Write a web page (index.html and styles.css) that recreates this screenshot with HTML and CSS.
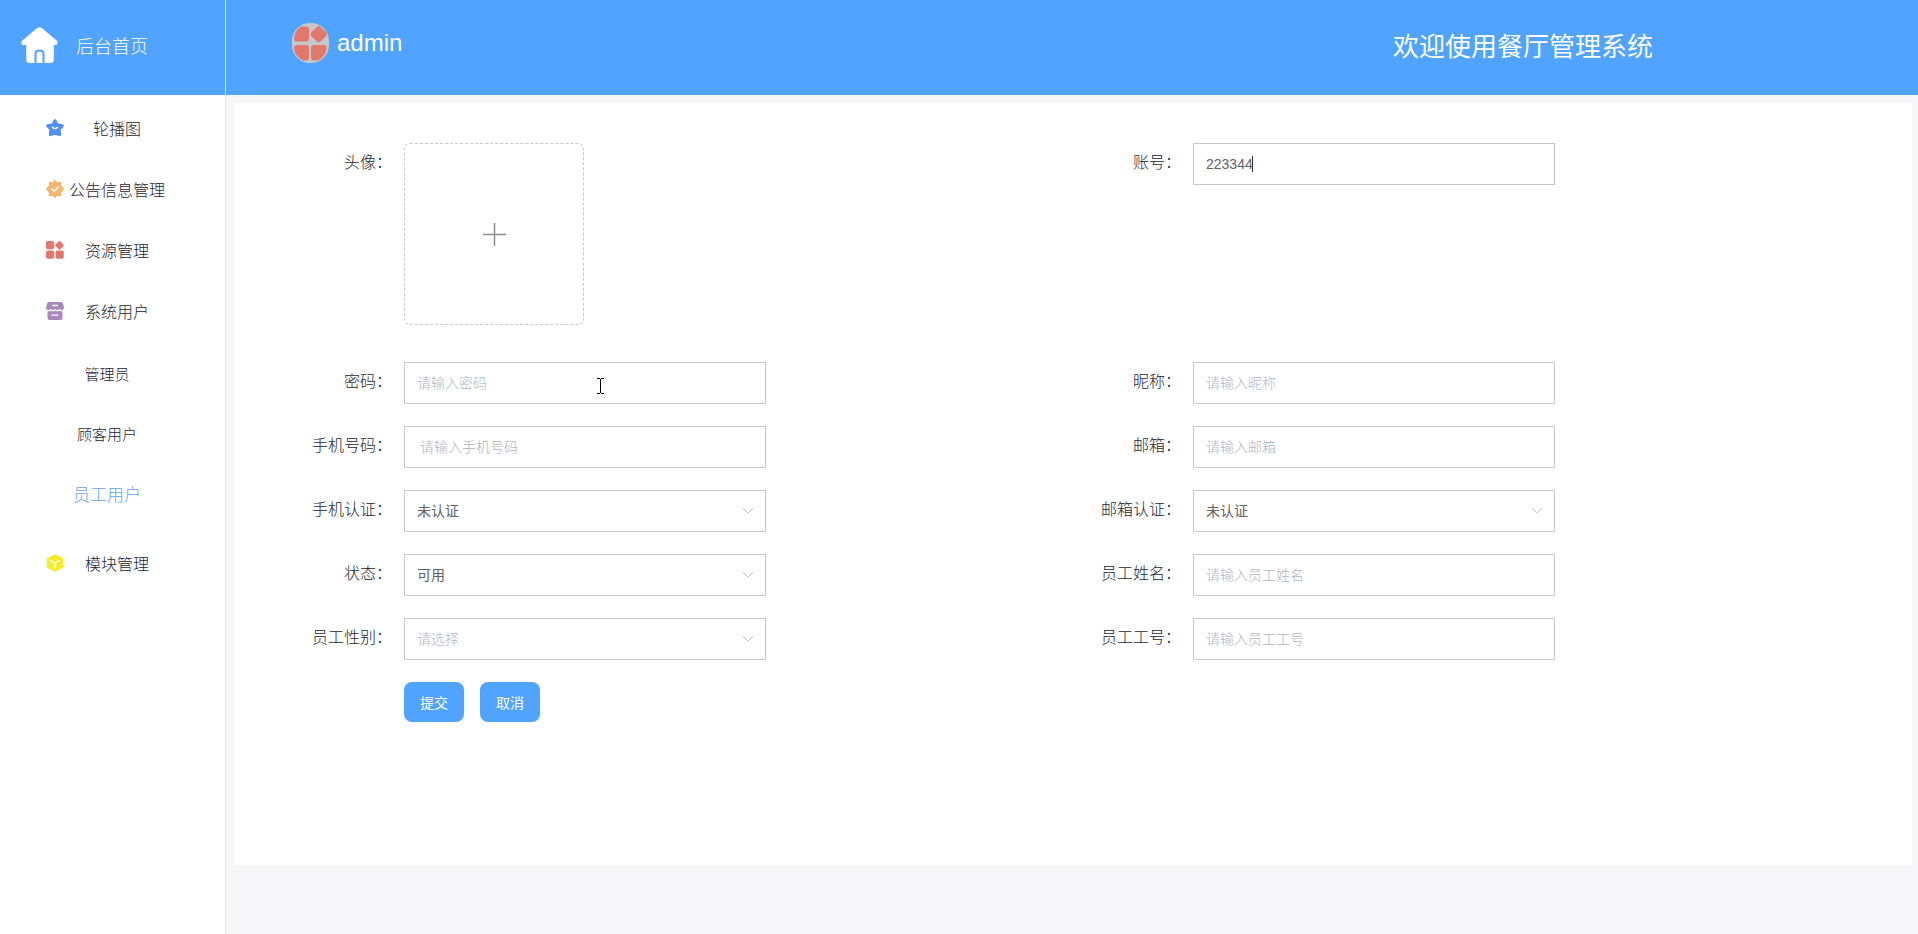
FILE: index.html
```html
<!DOCTYPE html>
<html lang="zh-CN">
<head>
<meta charset="utf-8">
<meta name="viewport" content="width=device-width, initial-scale=1">
<title>餐厅管理系统</title>
<link rel="stylesheet" href="styles.css">
</head>
<body>
<div class="app">
  <aside class="sidebar">
    <a class="brand" href="#">
      <svg class="brand-icon" viewBox="0 0 37 37" aria-hidden="true">
        <path fill="#fff" d="M15.800 1.200q2.700-1.900 5.400 0L35.600 13.600c2 1.800.9 4.400-1.600 4.400h-1.200v14.500q0 3.500-3.500 3.500H23.500V26.500q0-4-5-4t-5 4V36H8.700q-3.500 0-3.500-3.500V18H3c-2.500 0-3.600-2.600-1.600-4.400z"/>
        <path fill="#fff" d="M15.500 36V27q0-2.500 3-2.500t3 2.500V36z"/>
      </svg>
      <span>后台首页</span>
    </a>
    <nav class="menu">
      <a class="menu-item" href="#">
        <svg class="menu-icon" viewBox="0 0 18 18" aria-hidden="true"><path fill="#4f8ff7" stroke="#4f8ff7" stroke-width="3" stroke-linejoin="round" d="M9 1.700l2 4.100 5.300.9-3.300 3.700.7 5.200L9 14.400l-4.700 1.200.7-5.200L1.700 6.700l5.300-.9z"/><path fill="none" stroke="#fff" stroke-width="1.300" stroke-linecap="round" d="M6.400 8.300q2.600 2.600 5.200 0"/></svg>
        <span>轮播图</span>
      </a>
      <a class="menu-item" href="#">
        <svg class="menu-icon" viewBox="0 0 18 18" aria-hidden="true"><path fill="#f3b673" stroke="#f3b673" stroke-width="1.200" stroke-linejoin="round" d="M9 .6l2 2.300 3.700-.6-.1 3.400L17.400 9l-2.800 3.300.1 3.400-3.700-.6-2 2.300-2-2.300-3.700.6.100-3.400L.6 9l2.800-3.300-.1-3.400 3.700.6z"/><path fill="none" stroke="#fff" stroke-width="1.300" stroke-linecap="round" stroke-linejoin="round" d="M5.800 9l2.300 2.200 4-4"/></svg>
        <span>公告信息管理</span>
      </a>
      <a class="menu-item" href="#">
        <svg class="menu-icon" viewBox="0 0 18 18" aria-hidden="true"><g fill="#e1786b"><rect x="0" y="0" width="8.200" height="8.200" rx="1.800"/><rect x="0" y="9.600" width="8.200" height="8.200" rx="1.800"/><rect x="9.600" y="9.600" width="8.200" height="8.200" rx="1.800"/><rect x="10.100" y=".9" width="6.800" height="6.800" rx="1.600" transform="rotate(45 13.500 4.300)"/></g></svg>
        <span>资源管理</span>
      </a>
      <a class="menu-item" href="#">
        <svg class="menu-icon" viewBox="0 0 18 18" aria-hidden="true"><path fill="#a888bd" d="M3 0h12q1.500 0 2 1.500L18 5.500q0 2.500-2.200 2.500-1.500 0-2.300-1.200Q12.500 8 11.200 8T9 6.800Q8 8 6.800 8T4.500 6.800Q3.700 8 2.200 8 0 8 0 5.500l1-4Q1.500 0 3 0z"/><path fill="#a888bd" d="M1.500 9.200q2 .3 3-.8 1 1 2.300.9Q8 9.300 9 8.400q1 .9 2.200.9 1.300.1 2.300-.9 1 1.100 3 .8V16q0 2-2 2h-11q-2 0-2-2z"/><path fill="none" stroke="#fff" stroke-width="1.300" stroke-linecap="round" d="M6.500 3.500h5M6 13.200h6"/></svg>
        <span>系统用户</span>
      </a>
      <div class="submenu">
        <a class="submenu-item" href="#">管理员</a>
        <a class="submenu-item" href="#">顾客用户</a>
        <a class="submenu-item is-active" href="#" aria-current="page">员工用户</a>
      </div>
      <a class="menu-item" href="#">
        <svg class="menu-icon" viewBox="0 0 18 18" aria-hidden="true"><path fill="#f2ec2c" stroke="#f2ec2c" stroke-width="1.500" stroke-linejoin="round" d="M9 .9l7.500 4v8.200L9 17.100l-7.500-4V4.900z"/><path fill="none" stroke="#fff" stroke-width="1.200" stroke-linecap="round" d="M4.600 6.600L9 9.300l4.400-2.700M9 9.300v4.500"/></svg>
        <span>模块管理</span>
      </a>
    </nav>
  </aside>

  <div class="page">
    <header class="topbar">
      <div class="user">
        <svg class="avatar" viewBox="0 0 37 40" role="img" aria-label="头像"><rect width="37" height="40" rx="18" fill="#c6c7ca"/><g fill="#e1786b"><path d="M9 3.500h5q3 0 3 3v9q0 3-3 3H5q-3 0-3-3Q2.500 7.500 9 3.500z"/><path d="M5 22h9q3 0 3 3v9.500q0 3-3 3H11Q2.500 33 2 25q0-3 3-3z"/><path d="M22 22h9.500q3 0 3 3-.5 8-8.500 12.500h-4q-3 0-3-3V25q0-3 3-3z"/><rect x="20.200" y="4.700" width="13" height="13" rx="3" transform="rotate(45 26.700 11.200)"/></g></svg>
        <span>admin</span>
      </div>
      <h1 class="title">欢迎使用餐厅管理系统</h1>
    </header>

    <main class="content">
      <form class="card">
        <div class="form-grid">
          <div class="field field-upload">
            <label class="label" for="avatar">头像：</label>
            <button class="upload" id="avatar" type="button" aria-label="上传头像">
              <svg class="plus" viewBox="0 0 24 24" aria-hidden="true"><path fill="none" stroke="#8c8c96" stroke-width="1.500" d="M12.500 1v23M1 12.500h23"/></svg>
            </button>
          </div>
          <div class="field">
            <label class="label" for="account">账号：</label>
            <div class="control"><input class="input" id="account" type="text" value="223344"><span class="caret"></span></div>
          </div>
          <div class="field">
            <label class="label" for="password">密码：</label>
            <div class="control">
              <input class="input" id="password" type="password" placeholder="请输入密码">
              <svg class="pointer" viewBox="0 0 7 16" aria-hidden="true"><path fill="none" stroke="#000" d="M0 .5h3M4 .5h3M3.500 1v14M0 15.500h3M4 15.500h3"/></svg>
            </div>
          </div>
          <div class="field">
            <label class="label" for="nickname">昵称：</label>
            <div class="control"><input class="input" id="nickname" type="text" placeholder="请输入昵称"></div>
          </div>
          <div class="field">
            <label class="label" for="phone">手机号码：</label>
            <div class="control"><input class="input input-phone" id="phone" type="tel" placeholder="请输入手机号码"></div>
          </div>
          <div class="field">
            <label class="label" for="email">邮箱：</label>
            <div class="control"><input class="input" id="email" type="email" placeholder="请输入邮箱"></div>
          </div>
          <div class="field">
            <label class="label" for="phone-auth">手机认证：</label>
            <div class="control">
              <select class="input" id="phone-auth"><option>未认证</option></select>
              <svg class="chevron" viewBox="0 0 12 8" aria-hidden="true"><path d="M1 1l5 5 5-5"/></svg>
            </div>
          </div>
          <div class="field">
            <label class="label" for="email-auth">邮箱认证：</label>
            <div class="control">
              <select class="input" id="email-auth"><option>未认证</option></select>
              <svg class="chevron" viewBox="0 0 12 8" aria-hidden="true"><path d="M1 1l5 5 5-5"/></svg>
            </div>
          </div>
          <div class="field">
            <label class="label" for="status">状态：</label>
            <div class="control">
              <select class="input" id="status"><option>可用</option></select>
              <svg class="chevron" viewBox="0 0 12 8" aria-hidden="true"><path d="M1 1l5 5 5-5"/></svg>
            </div>
          </div>
          <div class="field">
            <label class="label" for="staff-name">员工姓名：</label>
            <div class="control"><input class="input" id="staff-name" type="text" placeholder="请输入员工姓名"></div>
          </div>
          <div class="field">
            <label class="label" for="gender">员工性别：</label>
            <div class="control">
              <select class="input is-empty" id="gender"><option value="">请选择</option></select>
              <svg class="chevron" viewBox="0 0 12 8" aria-hidden="true"><path d="M1 1l5 5 5-5"/></svg>
            </div>
          </div>
          <div class="field">
            <label class="label" for="staff-no">员工工号：</label>
            <div class="control"><input class="input" id="staff-no" type="text" placeholder="请输入员工工号"></div>
          </div>
          <div class="actions">
            <button class="button" type="submit">提交</button>
            <button class="button" type="button">取消</button>
          </div>
        </div>
      </form>
    </main>
  </div>
</div>
</body>
</html>
```
FILE: styles.css
```css
* {
  box-sizing: border-box;
}

body {
  margin: 0;
  font-family: "Liberation Sans", "Noto Sans CJK SC", sans-serif;
  font-size: 16px;
  color: #1c2530;
  background: #f6f6f8;
}

a {
  color: inherit;
  text-decoration: none;
}

button,
input,
select {
  font: inherit;
}

.app {
  display: grid;
  grid-template-columns: 226px minmax(0, 1fr);
  min-height: 100vh;
}

/* Sidebar */
.sidebar {
  background: #fff;
  border-right: 1px solid #e2e4ea;
}

.brand {
  display: flex;
  align-items: center;
  gap: 18px;
  height: 95px;
  padding: 0 21px 4px;
  font-size: 18px;
  font-weight: 300;
  color: #fff;
  background: #50a3ff;
}

.brand span {
  padding-bottom: 2px;
}

.brand-icon {
  width: 37px;
  height: 37px;
}

.menu {
  padding-top: 2px;
}

.menu-item {
  display: flex;
  align-items: center;
  gap: 5px;
  height: 61px;
  padding-left: 46px;
  font-weight: 300;
}

.menu-item span {
  width: 96px;
  text-align: center;
}

.menu-icon {
  width: 18px;
  height: 18px;
}

.submenu {
  padding: 2px 11px 9px 0;
}

.submenu-item {
  display: flex;
  align-items: center;
  justify-content: center;
  height: 60px;
  font-size: 15px;
  font-weight: 300;
}

.submenu-item.is-active {
  font-size: 17px;
  color: #5fa6f2;
}

/* Top bar */
.page {
  display: flex;
  flex-direction: column;
}

.topbar {
  display: flex;
  align-items: center;
  justify-content: space-between;
  height: 95px;
  padding: 0 265px 0 66px;
  color: #fff;
  background: #50a3ff;
}

.user {
  display: flex;
  align-items: center;
  gap: 8px;
  padding-bottom: 9px;
  font-size: 24px;
}

.avatar {
  width: 37px;
  height: 40px;
}

.title {
  margin: 0;
  padding-bottom: 6px;
  font-size: 26px;
  font-weight: 400;
}

/* Form */
.content {
  padding: 8px 6px 69px 8px;
  flex: 1;
  display: flex;
}

.card {
  flex: 1;
  padding: 40px 50px;
  background: #fff;
}

.form-grid {
  display: grid;
  grid-template-columns: repeat(2, minmax(0, 1fr));
  row-gap: 22px;
}

.field {
  display: flex;
  align-items: flex-start;
}

.field-upload {
  padding-bottom: 15px;
}

.label {
  flex: 0 0 120px;
  padding-right: 12px;
  line-height: 40px;
  font-weight: 300;
  text-align: right;
}

.control {
  position: relative;
  flex: 0 1 362px;
}

.input {
  display: block;
  width: 100%;
  height: 42px;
  padding: 0 12px;
  border: 1px solid #c8c8cc;
  border-radius: 0;
  outline: none;
  appearance: none;
  font-size: 14px;
  color: #606266;
  background: #fff;
}

.input-phone {
  padding-left: 15px;
}

.input::placeholder {
  font-weight: 300;
  color: #b0b4be;
}

.is-empty {
  font-weight: 300;
  color: #b0b4be;
}

.chevron {
  position: absolute;
  top: 17px;
  right: 12px;
  width: 12px;
  height: 8px;
  fill: none;
  stroke: #c0c4cc;
  pointer-events: none;
}

.caret {
  position: absolute;
  top: 13px;
  left: 59px;
  width: 1px;
  height: 16px;
  background: #303133;
}

.pointer {
  position: absolute;
  top: 16px;
  left: 193px;
  width: 7px;
  height: 16px;
  pointer-events: none;
}

.upload {
  display: flex;
  align-items: center;
  justify-content: center;
  width: 180px;
  height: 182px;
  padding: 0;
  border: 1px dashed #c8c8c8;
  border-radius: 6px;
  background: #fff;
}

.plus {
  width: 24px;
  height: 24px;
}

.actions {
  display: flex;
  gap: 16px;
  padding-left: 120px;
}

.button {
  width: 60px;
  height: 40px;
  padding: 0;
  border: 0;
  border-radius: 8px;
  font-size: 14px;
  color: #fff;
  background: #50a3ff;
}
```
